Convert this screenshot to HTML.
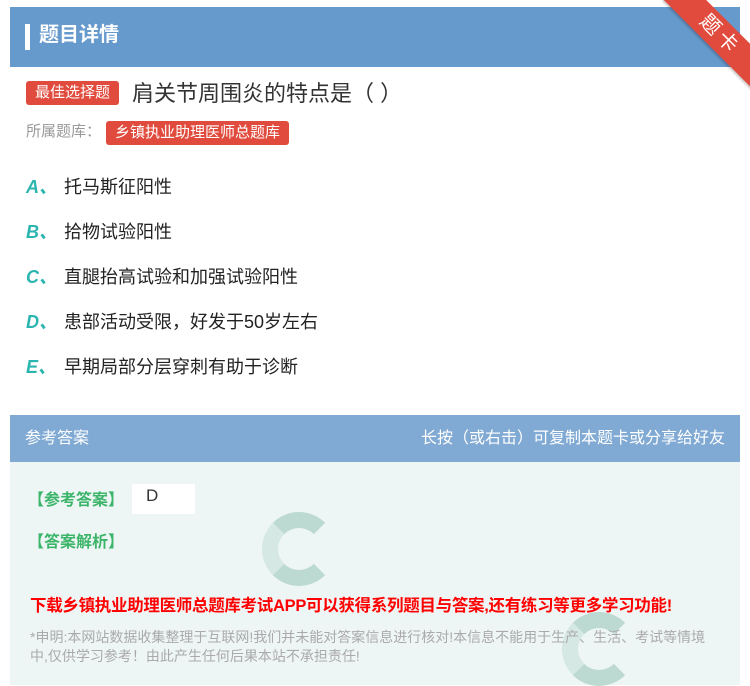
<!DOCTYPE html>
<html><head><meta charset="utf-8"><style>
*{margin:0;padding:0;box-sizing:border-box}
body{width:750px;height:685px;background:#fff;font-family:"Liberation Sans","Noto Sans CJK SC",sans-serif;position:relative;overflow:hidden}
.hd{position:absolute;left:10px;top:7px;width:730px;height:60px;background:#6699cc}
.hd .bar{position:absolute;left:15px;top:17px;width:5px;height:26px;background:#fff}
.hd .t{position:absolute;left:29px;top:14px;font-size:20px;color:#fff;font-weight:bold;line-height:28px}
.rib{position:absolute;width:130px;height:30px;background:#e04b3d;transform:rotate(45deg);transform-origin:center;color:#fff;text-align:center;font-size:20px;line-height:30px;letter-spacing:4px;top:20px;right:-35px;box-shadow:0 2px 2px rgba(0,0,0,.2)}
.tag{position:absolute;background:#e04b3d;color:#fff;border-radius:3px;font-size:15px;line-height:24px;padding:0 9px}
.q{position:absolute;left:132px;top:79px;font-size:22px;color:#333;line-height:30px}
.lib{position:absolute;left:26px;top:121px;font-size:15px;color:#999;line-height:22px}
.op{position:absolute;left:26px;font-size:18px;color:#222;line-height:24px}
.op b{display:inline-block;width:38px;color:#2bb5b0;font-style:italic;font-size:18px}
.ah{position:absolute;left:10px;top:415px;width:730px;height:47px;background:#80aad4;color:#fff;font-size:16px;line-height:47px;padding:0 15px}
.ab{position:absolute;left:10px;top:462px;width:730px;height:223px;background:#eef6f5}
.g{position:absolute;color:#3cb56a;font-size:16px;font-weight:bold;left:28px}
.dl{position:absolute;left:30px;top:592px;color:#f00;font-size:16.5px;font-weight:bold;letter-spacing:-0.3px;white-space:nowrap}
.sm{position:absolute;left:30px;top:628px;width:685px;color:#aaa;font-size:14px;line-height:19px}
.sw{position:absolute;border-radius:50%;border:16px solid #bcd9d2;border-right-color:transparent;border-left-color:#d5e8e3}
</style></head><body>
<div class="hd"><div class="bar"></div><div class="t">题目详情</div></div>
<div class="rib">题卡</div>
<div class="tag" style="left:26px;top:81px">最佳选择题</div>
<div class="q">肩关节周围炎的特点是（ ）</div>
<div class="lib">所属题库：</div>
<div class="tag" style="left:106px;top:121px">乡镇执业助理医师总题库</div>
<div class="op" style="top:175px"><b>A、</b>托马斯征阳性</div>
<div class="op" style="top:220px"><b>B、</b>拾物试验阳性</div>
<div class="op" style="top:265px"><b>C、</b>直腿抬高试验和加强试验阳性</div>
<div class="op" style="top:310px"><b>D、</b>患部活动受限，好发于50岁左右</div>
<div class="op" style="top:355px"><b>E、</b>早期局部分层穿刺有助于诊断</div>
<div class="ah">参考答案<span style="float:right">长按（或右击）可复制本题卡或分享给好友</span></div>
<div class="ab">
<div class="sw" style="left:252px;top:50px;width:74px;height:74px"></div>
<div class="sw" style="left:552px;top:150px;width:74px;height:74px"></div>
</div>
<div class="g" style="top:486px">【参考答案】</div>
<div style="position:absolute;left:132px;top:484px;width:63px;height:30px;background:#fff;font-size:17px;color:#333;padding:2px 14px">D</div>
<div class="g" style="top:528px">【答案解析】</div>
<div class="dl">下载乡镇执业助理医师总题库考试APP可以获得系列题目与答案,还有练习等更多学习功能!</div>
<div class="sm">*申明:本网站数据收集整理于互联网!我们并未能对答案信息进行核对!本信息不能用于生产、生活、考试等情境中,仅供学习参考！由此产生任何后果本站不承担责任!</div>
</body></html>
